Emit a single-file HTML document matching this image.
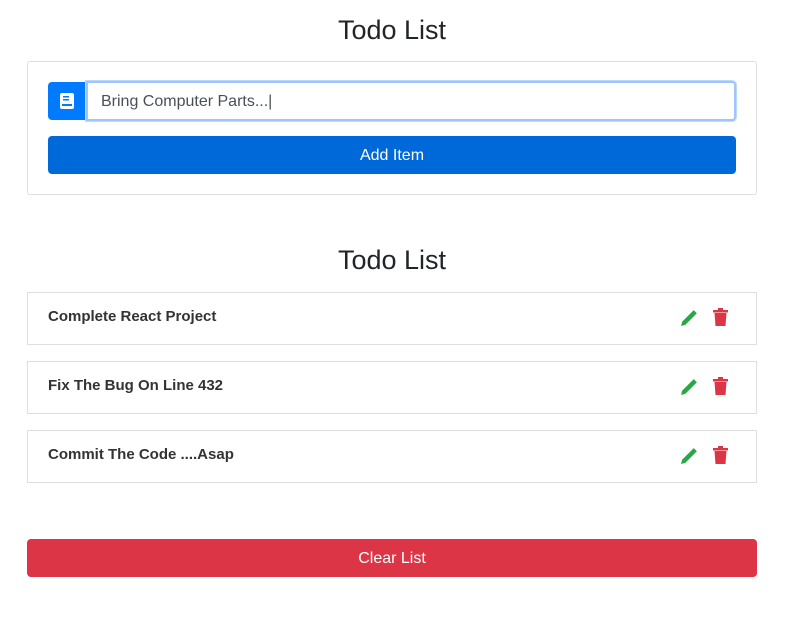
<!DOCTYPE html>
<html><head><style>
body{margin:0;background:#fff;font-family:"Liberation Sans",sans-serif;color:#212529;width:792px;height:630px;position:relative;overflow:hidden}
.h{position:absolute;left:0;width:784px;text-align:center;font-size:27px;font-weight:500}
.card{position:absolute;left:27px;width:728px;border:1px solid #dfdfdf;border-radius:3px;box-sizing:border-box}
.item{position:absolute;left:27px;width:730px;height:53px;border:1px solid #dfdfdf;box-sizing:border-box}
.item span{position:absolute;left:20px;top:15px;font-size:15px;font-weight:bold;color:#333}
.ic{position:absolute;top:15px}
</style></head><body>
<div class="h" style="top:15px">Todo List</div>
<div class="card" style="top:61px;height:134px;width:730px">
 <div style="position:absolute;left:20px;top:20px;width:39px;height:38px;background:#007bff;border-radius:4px 0 0 4px">
  <svg width="14" height="16" style="position:absolute;left:12px;top:11px" viewBox="0 0 14 16"><rect x="0" y="0" width="14" height="16" rx="2" fill="#fff"/><rect x="3" y="3" width="6" height="1.5" fill="#007bff"/><rect x="3" y="6" width="6" height="1.5" fill="#007bff"/><rect x="2" y="11" width="10" height="2" fill="#007bff"/></svg>
 </div>
 <div style="position:absolute;left:58px;top:19px;width:650px;height:40px;border:2px solid #9ec5fe;box-shadow:0 0 0 1px #bcd8fd;border-radius:0 4px 4px 0;box-sizing:border-box;background:#fff">
  <span style="position:absolute;left:13px;top:10px;font-size:16px;color:#495057">Bring Computer Parts...|</span>
 </div>
 <div style="position:absolute;left:20px;top:74px;width:688px;height:38px;background:#0069d9;border-radius:4px;color:#fff;font-size:16px;text-align:center;line-height:40px">Add Item</div>
</div>
<div class="h" style="top:245px">Todo List</div>
<div class="item" style="top:292px"><span>Complete React Project</span>
<svg class="ic" style="left:652px" width="19" height="19" viewBox="0 0 18 18"><path d="M1 17l1-4L13 2l3 3L5 16z" fill="#28a745"/></svg>
<svg class="ic" style="left:685px" width="15" height="18" viewBox="0 0 15 18"><rect x="0" y="2" width="15" height="2.5" fill="#dc3545"/><rect x="5" y="0" width="5" height="2" fill="#dc3545"/><path d="M1.5 5h12l-1 13h-10z" fill="#dc3545"/></svg></div>
<div class="item" style="top:361px"><span>Fix The Bug On Line 432</span>
<svg class="ic" style="left:652px" width="19" height="19" viewBox="0 0 18 18"><path d="M1 17l1-4L13 2l3 3L5 16z" fill="#28a745"/></svg>
<svg class="ic" style="left:685px" width="15" height="18" viewBox="0 0 15 18"><rect x="0" y="2" width="15" height="2.5" fill="#dc3545"/><rect x="5" y="0" width="5" height="2" fill="#dc3545"/><path d="M1.5 5h12l-1 13h-10z" fill="#dc3545"/></svg></div>
<div class="item" style="top:430px"><span>Commit The Code ....Asap</span>
<svg class="ic" style="left:652px" width="19" height="19" viewBox="0 0 18 18"><path d="M1 17l1-4L13 2l3 3L5 16z" fill="#28a745"/></svg>
<svg class="ic" style="left:685px" width="15" height="18" viewBox="0 0 15 18"><rect x="0" y="2" width="15" height="2.5" fill="#dc3545"/><rect x="5" y="0" width="5" height="2" fill="#dc3545"/><path d="M1.5 5h12l-1 13h-10z" fill="#dc3545"/></svg></div>
<div style="position:absolute;left:27px;top:539px;width:730px;height:38px;background:#dc3545;border-radius:4px;color:#fff;font-size:16px;text-align:center;line-height:40px">Clear List</div>
</body></html>
